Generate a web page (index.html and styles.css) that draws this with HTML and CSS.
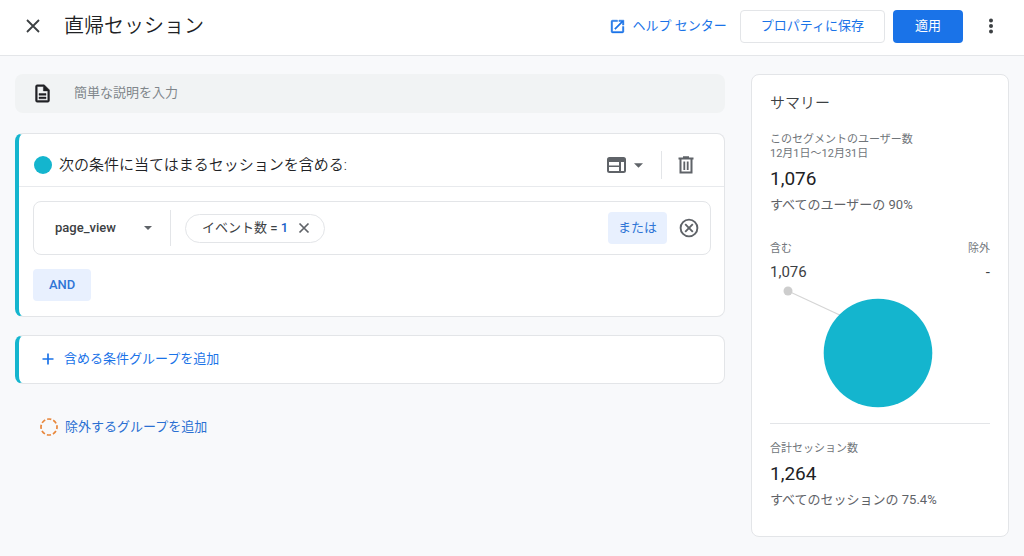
FILE: index.html
```html
<!DOCTYPE html>
<html lang="ja">
<head>
<meta charset="utf-8">
<meta name="viewport" content="width=device-width, initial-scale=1">
<title>直帰セッション</title>
<link rel="stylesheet" href="styles.css">
</head>
<body>
<header class="topbar">
  <button class="icon-btn close" type="button" aria-label="閉じる">
    <svg width="16" height="16" viewBox="0 0 16 16"><path d="M2 2l12 12M14 2L2 14" fill="none" stroke="#3c4043" stroke-width="1.8"/></svg>
  </button>
  <h1 class="title">直帰セッション</h1>
  <a class="help" href="#help">
    <svg width="17" height="17" viewBox="0 0 24 24" fill="currentColor"><path d="M19 19H5V5h7V3H5a2 2 0 0 0-2 2v14a2 2 0 0 0 2 2h14c1.1 0 2-.9 2-2v-7h-2v7zM14 3v2h3.590l-9.830 9.830 1.410 1.410L19 6.410V10h2V3h-7z" stroke="currentColor" stroke-width=".6"/></svg>
    <span>ヘルプ センター</span>
  </a>
  <button class="btn outline" type="button">プロパティに保存</button>
  <button class="btn primary" type="button">適用</button>
  <button class="icon-btn more" type="button" aria-label="その他">
    <svg width="6" height="16" viewBox="0 0 6 16" fill="#3c4043"><circle cx="3" cy="2.500" r="2"/><circle cx="3" cy="8" r="2"/><circle cx="3" cy="13.500" r="2"/></svg>
  </button>
</header>

<main class="page">
  <div class="builder">
    <label class="description">
      <svg width="21" height="21" viewBox="0 0 24 24" fill="#202124"><path d="M8 16h8v2H8zm0-4h8v2H8zm6-10H6c-1.100 0-2 .900-2 2v16c0 1.100.890 2 1.990 2H18c1.100 0 2-.900 2-2V8l-6-6zm4 18H6V4h7v5h5v11z" stroke="#202124" stroke-width=".5"/></svg>
      <input type="text" placeholder="簡単な説明を入力" aria-label="簡単な説明を入力">
    </label>

    <section class="group">
      <div class="group-head">
        <span class="dot"></span>
        <h2 class="group-title">次の条件に当てはまるセッションを含める:</h2>
        <button class="icon-btn scope" type="button" aria-label="範囲" aria-haspopup="true">
          <svg width="19" height="16" viewBox="0 0 19 16"><rect x="1" y="1" width="17" height="14" rx="1.500" fill="none" stroke="#5f6368" stroke-width="2"/><path d="M1 1h17v4H1zM12 5h2v10h-2zM1 8.500h11v1.600H1z" fill="#5f6368"/></svg>
          <svg width="9" height="5" viewBox="0 0 10 5"><path d="M0 0h10L5 5z" fill="#5f6368"/></svg>
        </button>
        <button class="icon-btn trash" type="button" aria-label="削除">
          <svg width="16" height="18" viewBox="0 0 16 18" fill="none" stroke="#5f6368"><path d="M2.500 3v13.500h11V3" stroke-width="2"/><path d="M.500 2.500h15M5 1.200h6" stroke-width="2"/><path d="M6.300 5.500v8.500M9.700 5.500v8.500" stroke-width="1.800"/></svg>
        </button>
      </div>
      <div class="group-body">
        <div class="condition">
          <div class="event">
            <select aria-label="イベント"><option>page_view</option></select>
            <svg width="8" height="4" viewBox="0 0 8 4"><path d="M0 0h8L4 4z" fill="#5f6368"/></svg>
          </div>
          <div class="chip">
            <span>イベント数 <b>= <em>1</em></b></span>
            <button class="icon-btn" type="button" aria-label="条件を削除">
              <svg width="12" height="12" viewBox="0 0 12 12"><path d="M1.500 1.500l9 9M10.500 1.500l-9 9" fill="none" stroke="#5f6368" stroke-width="1.700"/></svg>
            </button>
          </div>
          <button class="btn tonal" type="button">または</button>
          <button class="icon-btn" type="button" aria-label="行を削除">
            <svg width="20" height="20" viewBox="0 0 20 20" fill="none" stroke="#5f6368" stroke-width="1.900"><circle cx="10" cy="10" r="8.400"/><path d="M6.200 6.200l7.600 7.600M13.800 6.200l-7.600 7.600"/></svg>
          </button>
        </div>
        <button class="btn tonal" type="button">AND</button>
      </div>
    </section>

    <section class="group add">
      <button class="link-btn" type="button">
        <svg width="14" height="14" viewBox="0 0 14 14"><path d="M7 1.500v11M1.500 7h11" fill="none" stroke="currentColor" stroke-width="1.700"/></svg>
        <span>含める条件グループを追加</span>
      </button>
    </section>

    <button class="link-btn exclude" type="button">
      <svg width="18" height="18" viewBox="0 0 18 18"><circle cx="9" cy="9" r="8" fill="none" stroke="#e8863a" stroke-width="1.700" stroke-dasharray="4.200 2.083" stroke-dashoffset="2.100"/></svg>
      <span>除外するグループを追加</span>
    </button>
  </div>

  <aside class="summary">
    <h2 class="summary-title">サマリー</h2>
    <p class="caption">このセグメントのユーザー数<br>12月1日～12月31日</p>
    <p class="figure">1,076</p>
    <p class="share">すべてのユーザーの 90%</p>
    <dl class="split">
      <div><dt>含む</dt><dd>1,076</dd></div>
      <div class="right"><dt>除外</dt><dd>-</dd></div>
    </dl>
    <svg class="chart" viewBox="0 0 220 124"><path d="M18 6L74 32" stroke="#d5d5d5" stroke-width="1.200"/><circle cx="18" cy="6" r="4.500" fill="#cdcdcd"/><circle cx="108" cy="68" r="54.300" fill="#14b5ce"/></svg>
    <div class="total">
      <p class="caption">合計セッション数</p>
      <p class="figure">1,264</p>
      <p class="share">すべてのセッションの 75.4%</p>
    </div>
  </aside>
</main>
</body>
</html>
```
FILE: styles.css
```css
* {
  box-sizing: border-box;
}

body {
  margin: 0;
  min-height: 100vh;
  background: #f8f9fb;
  color: #3c4043;
  font-family: Roboto, "Noto Sans CJK JP", sans-serif;
  font-size: 13px;
  line-height: 20px;
}

h1, h2, p, dl, dd {
  margin: 0;
  font-weight: 400;
}

button, input, select {
  font: inherit;
  color: inherit;
}

button {
  cursor: pointer;
}

svg {
  display: block;
  flex: none;
}

.topbar {
  display: flex;
  align-items: center;
  min-height: 56px;
  padding: 0 25px 3px;
  background: #fff;
  border-bottom: 1px solid #e4e6e9;
}

.icon-btn {
  display: flex;
  align-items: center;
  padding: 0;
  border: 0;
  background: none;
}

.title {
  flex: 1;
  margin-left: 23px;
  color: #202124;
  font-size: 20px;
  font-weight: 350;
  line-height: 28px;
}

.help {
  display: flex;
  align-items: center;
  gap: 7px;
  margin-right: 13px;
  color: #1a73e8;
  text-decoration: none;
}

.btn {
  height: 32px;
  padding: 0 15px;
  border: 0;
  border-radius: 4px;
}

.outline {
  height: 33px;
  padding: 0 20px;
  border: 1px solid #e3e5e8;
  background: #fff;
  color: #1a73e8;
}

.primary {
  height: 33px;
  margin-left: 8px;
  padding: 0 22px;
  background: #1a73e8;
  color: #fff;
}

.more {
  margin-left: 25px;
  margin-right: 5px;
}

.page {
  display: grid;
  grid-template-columns: 1fr 258px;
  align-items: start;
  gap: 26px;
  padding: 18px 15px;
}

.builder {
  display: flex;
  flex-direction: column;
}

.description {
  display: flex;
  align-items: center;
  gap: 21px;
  height: 39px;
  padding: 0 17px;
  border-radius: 8px;
  background: #f1f3f4;
}

.description input {
  flex: 1;
  padding: 0 0 2px;
  border: 0;
  background: none;
}

.description input::placeholder {
  color: #80868b;
}

.group {
  margin-top: 20px;
  border: 1px solid #e3e5e8;
  border-left: 4px solid #14b5ce;
  border-radius: 8px;
  background: #fff;
}

.group-head {
  display: flex;
  align-items: center;
  padding: 10px 30px 0 15px;
  height: 53px;
  border-bottom: 1px solid #e8eaed;
}

.dot {
  width: 18px;
  height: 18px;
  margin-right: 7px;
  border-radius: 50%;
  background: #14b5ce;
}

.group-title {
  flex: 1;
  color: #202124;
  font-size: 15px;
  font-weight: 350;
}

.scope {
  gap: 8px;
}

.trash {
  height: 28px;
  margin-left: 18px;
  padding-left: 16px;
  border-left: 1px solid #e3e5e8;
}

.group-body {
  display: flex;
  flex-direction: column;
  align-items: flex-start;
  gap: 14px;
  padding: 14px 13px 15px 14px;
}

.condition {
  display: flex;
  align-items: center;
  align-self: stretch;
  gap: 12px;
  height: 54px;
  padding: 0 11px 0 21px;
  border: 1px solid #e3e5e8;
  border-radius: 8px;
}

.event {
  display: grid;
  grid-template-columns: 115px;
  align-items: center;
  height: 36px;
  margin-right: 2px;
  border-right: 1px solid #e3e5e8;
}

.event select,
.event svg {
  grid-area: 1 / 1;
}

.event svg {
  justify-self: end;
  margin-right: 18px;
  pointer-events: none;
}

.event select {
  appearance: none;
  padding: 0;
  border: 0;
  background: none;
  font-weight: 500;
}

.chip {
  display: flex;
  align-items: center;
  gap: 10px;
  height: 29px;
  margin-right: auto;
  padding: 0 14px 0 16px;
  border: 1px solid #e3e5e8;
  border-radius: 15px;
}

.chip b {
  font-weight: 500;
}

.chip em {
  color: #1a5fc8;
  font-style: normal;
}

.tonal {
  padding: 0 10px;
  background: #e8f0fe;
  color: #2f75d6;
  font-weight: 500;
}

.condition .tonal {
  font-weight: 400;
}

.group-body > .tonal {
  padding: 0 16px;
}

.link-btn {
  display: flex;
  align-items: center;
  gap: 9px;
  padding: 0;
  border: 0;
  background: none;
  color: #1a73e8;
}

.add {
  margin-top: 18px;
  padding: 13px 22px 14px;
}

.exclude {
  align-self: flex-start;
  gap: 7px;
  margin: 33px 0 0 25px;
  color: #2a6fd2;
}

.summary {
  padding: 18px;
  border: 1px solid #e3e5e8;
  border-radius: 8px;
  background: #fff;
}

.summary-title {
  font-size: 15px;
  font-weight: 350;
}

.caption {
  margin-top: 20px;
  color: #70757a;
  font-size: 11px;
  line-height: 14px;
}

.figure {
  margin-top: 6px;
  color: #202124;
  font-size: 19px;
  line-height: 24px;
}

.share {
  margin-top: 4px;
  color: #5f6368;
}

.split {
  display: flex;
  justify-content: space-between;
  margin-top: 27px;
}

.split dt {
  color: #70757a;
  font-size: 11px;
  line-height: 14px;
}

.split dd {
  margin-top: 6px;
  font-size: 15px;
}

.right {
  text-align: right;
}

.chart {
  width: 100%;
  margin-top: 3px;
}

.total {
  margin-top: 14px;
  padding-bottom: 8px;
  border-top: 1px solid #e3e5e8;
}

.total .caption {
  margin-top: 18px;
}
```
